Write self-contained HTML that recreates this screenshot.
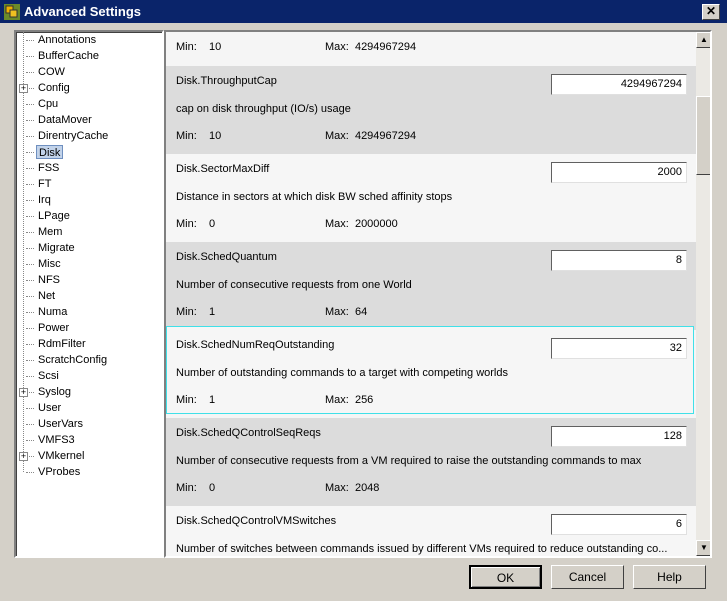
<!DOCTYPE html>
<html><head><style>
*{margin:0;padding:0;box-sizing:border-box}
body{width:727px;height:601px;background:#d4d0c8;font-family:"Liberation Sans",sans-serif;font-size:11px;color:#000;position:relative;overflow:hidden}
.abs{position:absolute}
#title{left:0;top:0;width:727px;height:24px;background:#0a246a;border-bottom:1px solid #d4d0c8}
#title span{position:absolute;left:24px;top:4px;color:#fff;font-weight:bold;font-size:13px}
#close{left:702px;top:4px;width:18px;height:16px;background:#d4d0c8;border:1px solid;border-color:#fff #404040 #404040 #fff;font-size:12px;font-weight:bold;text-align:center;line-height:13px}
#tree{left:14px;top:30px;width:150px;height:528px;background:#fff;border:2px solid;border-color:#808080 #fff #fff #808080;box-shadow:inset 1px 1px 0 #404040}
.ti{position:absolute;left:20px;height:14px;line-height:14px;padding:0 2px}
.dl{position:absolute;left:10px;width:8px;border-top:1px dotted #888}
.pb{position:absolute;left:3px;width:9px;height:9px;border:1px solid #888;background:#fff;font-size:9px;line-height:7px;text-align:center}
#content{left:164px;top:30px;width:548px;height:528px;border:2px solid;border-color:#808080 #fff #fff #808080;background:#f5f5f5;overflow:hidden}
.sec{position:absolute;left:0;width:530px;height:88px}
.g{background:#dcdcdc}.l{background:#f6f6f6}
.t{position:absolute;left:10px}
.inp{position:absolute;left:385px;width:136px;height:21px;background:#fff;border:1px solid;border-color:#606060 #e0e0e0 #e0e0e0 #606060;text-align:right;padding-right:4px;line-height:19px}
#sb{left:530px;top:0;width:16px;height:524px;background:#ebe9e4}
.btn3{position:absolute;background:#d4d0c8;border:1px solid;border-color:#fff #404040 #404040 #fff}
.b{position:absolute;height:24px;border:1px solid;border-color:#fff #404040 #404040 #fff;background:#d4d0c8;text-align:center;line-height:22px;font-size:12px}
</style></head><body>
<div id="title" class="abs">
<svg class="abs" style="left:4px;top:4px" width="16" height="16"><rect x="0" y="0" width="16" height="16" fill="#6a8a2a"/><rect x="2" y="2" width="7" height="7" fill="#f0b000" stroke="#333"/><rect x="6" y="6" width="7" height="7" fill="#f0c020" stroke="#333"/></svg>
<span>Advanced Settings</span></div>
<div id="close" class="abs">✕</div>

<div id="tree" class="abs">
<div class="abs" style="left:7px;top:0;height:440px;border-left:1px dotted #888"></div>
</div>

<div id="content" class="abs">
<div class="t" style="top:9px">Min:&nbsp;&nbsp;&nbsp;&nbsp;10</div><div class="t" style="left:159px;top:9px">Max:&nbsp;&nbsp;4294967294</div>
</div>

<script>
var items=["Annotations","BufferCache","COW","Config","Cpu","DataMover","DirentryCache","Disk","FSS","FT","Irq","LPage","Mem","Migrate","Misc","NFS","Net","Numa","Power","RdmFilter","ScratchConfig","Scsi","Syslog","User","UserVars","VMFS3","VMkernel","VProbes"];
var plus={"Config":1,"Syslog":1,"VMkernel":1};
var tr=document.getElementById("tree"),h="";
items.forEach(function(n,i){var y=1+i*16;
h+='<div class="dl" style="top:'+(y+7)+'px"></div>';
if(plus[n])h+='<div class="pb" style="top:'+(y+3)+'px">+</div>';
h+='<div class="ti" style="top:'+y+'px;'+(n=="Disk"?'background:#c2d3ea;border:1px solid #6f8fbf;':'')+'">'+n+'</div>';});
tr.innerHTML+=h;
var secs=[["Disk.ThroughputCap","4294967294","cap on disk throughput (IO/s) usage","10","4294967294"],
["Disk.SectorMaxDiff","2000","Distance in sectors at which disk BW sched affinity stops","0","2000000"],
["Disk.SchedQuantum","8","Number of consecutive requests from one World","1","64"],
["Disk.SchedNumReqOutstanding","32","Number of outstanding commands to a target with competing worlds","1","256"],
["Disk.SchedQControlSeqReqs","128","Number of consecutive requests from a VM required to raise the outstanding commands to max","0","2048"],
["Disk.SchedQControlVMSwitches","6","Number of switches between commands issued by different VMs required to reduce outstanding co...","",""]];
var c=document.getElementById("content"),s="";
secs.forEach(function(d,i){var top=34+i*88,cls=i%2==0?"g":"l";var sel=i==3;var o=sel?4:0;
if(sel)top-=4;
s+='<div class="sec '+cls+'" style="top:'+top+'px;'+(sel?'width:528px;box-shadow:inset 0 0 0 1px #40e0e8;':'')+'">'+
'<div class="t" style="top:'+(9+o)+'px">'+d[0]+'</div><div class="inp" style="top:'+(8+o)+'px">'+d[1]+'</div>'+
'<div class="t" style="top:'+(37+o)+'px;white-space:nowrap">'+d[2]+'</div>'+
(d[3]!==""?'<div class="t" style="top:'+(64+o)+'px">Min:&nbsp;&nbsp;&nbsp;&nbsp;'+d[3]+'</div><div class="t" style="left:159px;top:'+(64+o)+'px">Max:&nbsp;&nbsp;'+d[4]+'</div>':'')+'</div>';});
s+='<div id="sb" class="abs"><div class="btn3" style="left:0;top:0;width:16px;height:16px;font-size:8px;text-align:center;line-height:14px">▲</div><div class="btn3" style="left:0;top:64px;width:16px;height:79px"></div><div class="btn3" style="left:0;top:508px;width:16px;height:16px;font-size:8px;text-align:center;line-height:14px">▼</div></div>';
c.innerHTML+=s;
</script>
<div class="b" style="left:469px;top:565px;width:73px;border:2px solid #000;box-shadow:inset 1px 1px 0 #fff,inset -1px -1px 0 #808080">OK</div>
<div class="b" style="left:551px;top:565px;width:73px">Cancel</div>
<div class="b" style="left:633px;top:565px;width:73px">Help</div>
</body></html>
